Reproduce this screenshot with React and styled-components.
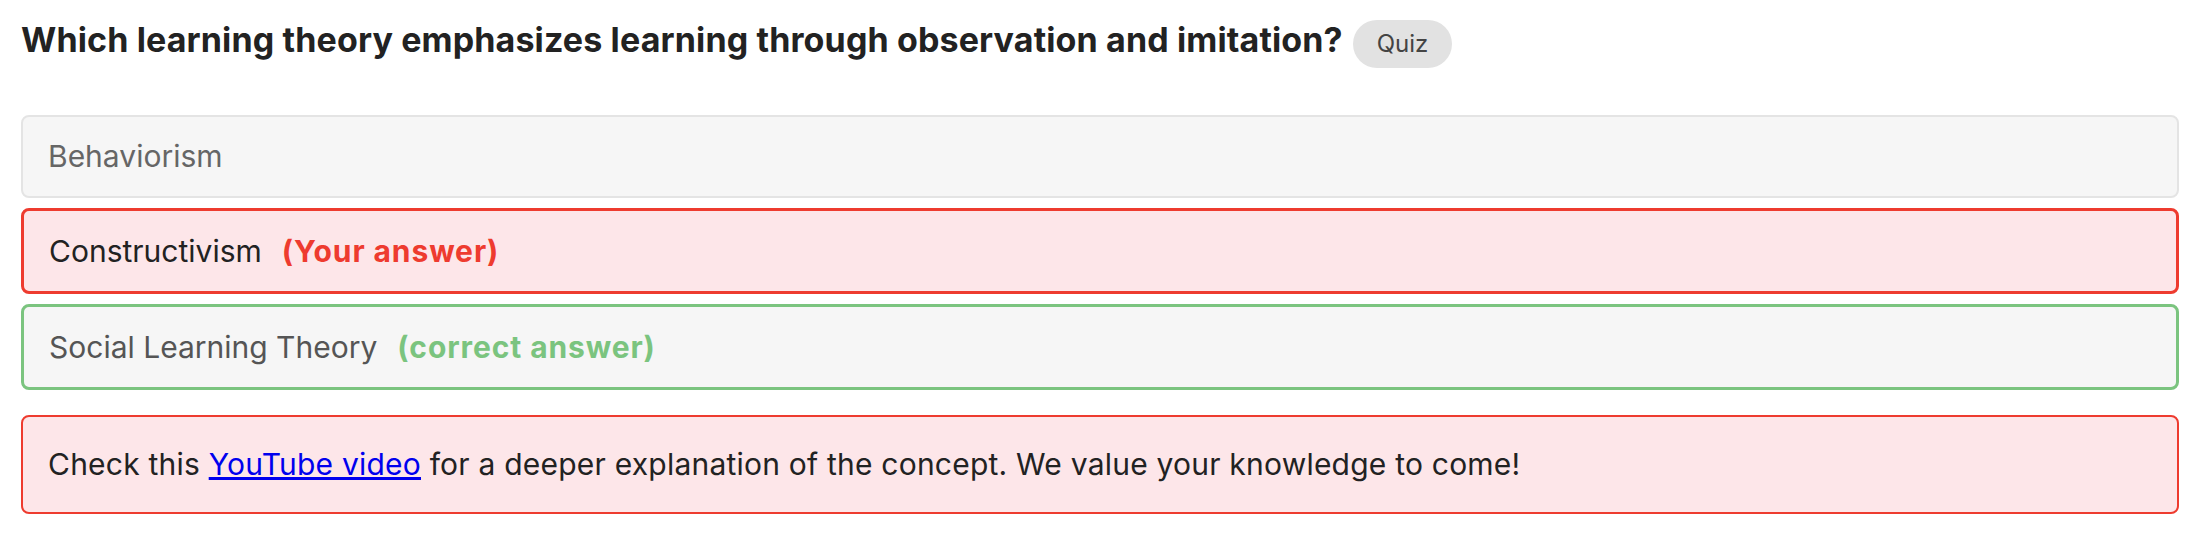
import React from "react";
import styled, { createGlobalStyle, css } from "styled-components";

const Global = createGlobalStyle`
  html, body { margin: 0; padding: 0; background: #fff; }
  body { font-family: Inter, "Noto Sans", "Liberation Sans", sans-serif; }
  * { box-sizing: border-box; }
`;

const Page = styled.main`
  padding: 16px 31px 0 21px;
`;

const Header = styled.header`
  display: flex;
  align-items: baseline;
  gap: 10px;
  margin-bottom: 47px;
`;

const Title = styled.h1`
  margin: 0;
  font-size: 34px;
  line-height: 48px;
  font-weight: 700;
  letter-spacing: 0.13px;
  color: #222;
`;

const Pill = styled.span`
  display: inline-block;
  padding: 6px 24px;
  border-radius: 999px;
  background: #e2e2e2;
  color: #444;
  font-size: 24px;
  line-height: 36px;
`;

const Options = styled.div`
  display: flex;
  flex-direction: column;
  gap: 10px;
`;

const variants = {
  neutral: css`
    padding: 17px 25px;
    border: 2px solid #e4e4e4;
    background: #f6f6f6;
    color: #666;
  `,
  wrong: css`
    padding: 17.5px 25px;
    border: 3px solid #ee3b2f;
    background: #fde6e9;
    color: #222;
  `,
  correct: css`
    padding: 17.5px 25px;
    border: 3px solid #7bc47f;
    background: #f6f6f6;
    color: #555;
  `,
};

const Option = styled.div`
  border-radius: 8px;
  font-size: 30px;
  line-height: 45px;
  ${(p) => variants[p.$variant]}
`;

const Tag = styled.span`
  margin-left: 20px;
  font-weight: 700;
  letter-spacing: 0.9px;
  color: ${(p) => p.$color};
`;

const Feedback = styled.div`
  margin-top: 25px;
  padding: 25px 25px;
  border: 2px solid #ee3b2f;
  border-radius: 8px;
  background: #fde6e9;
  color: #222;
  font-size: 30px;
  line-height: 45px;
  letter-spacing: 0.22px;
`;

const Link = styled.a`
  color: #0000ee;
  text-decoration: underline;
`;

export default function App() {
  return (
    <>
      <Global />
      <Page>
        <Header>
          <Title>Which learning theory emphasizes learning through observation and imitation?</Title>
          <Pill>Quiz</Pill>
        </Header>
        <Options>
          <Option $variant="neutral">Behaviorism</Option>
          <Option $variant="wrong">
            Constructivism<Tag $color="#ee3b2f">(Your answer)</Tag>
          </Option>
          <Option $variant="correct">
            Social Learning Theory<Tag $color="#7bc47f">(correct answer)</Tag>
          </Option>
        </Options>
        <Feedback>
          Check this <Link href="#">YouTube video</Link> for a deeper explanation of the concept. We value your knowledge to come!
        </Feedback>
      </Page>
    </>
  );
}
